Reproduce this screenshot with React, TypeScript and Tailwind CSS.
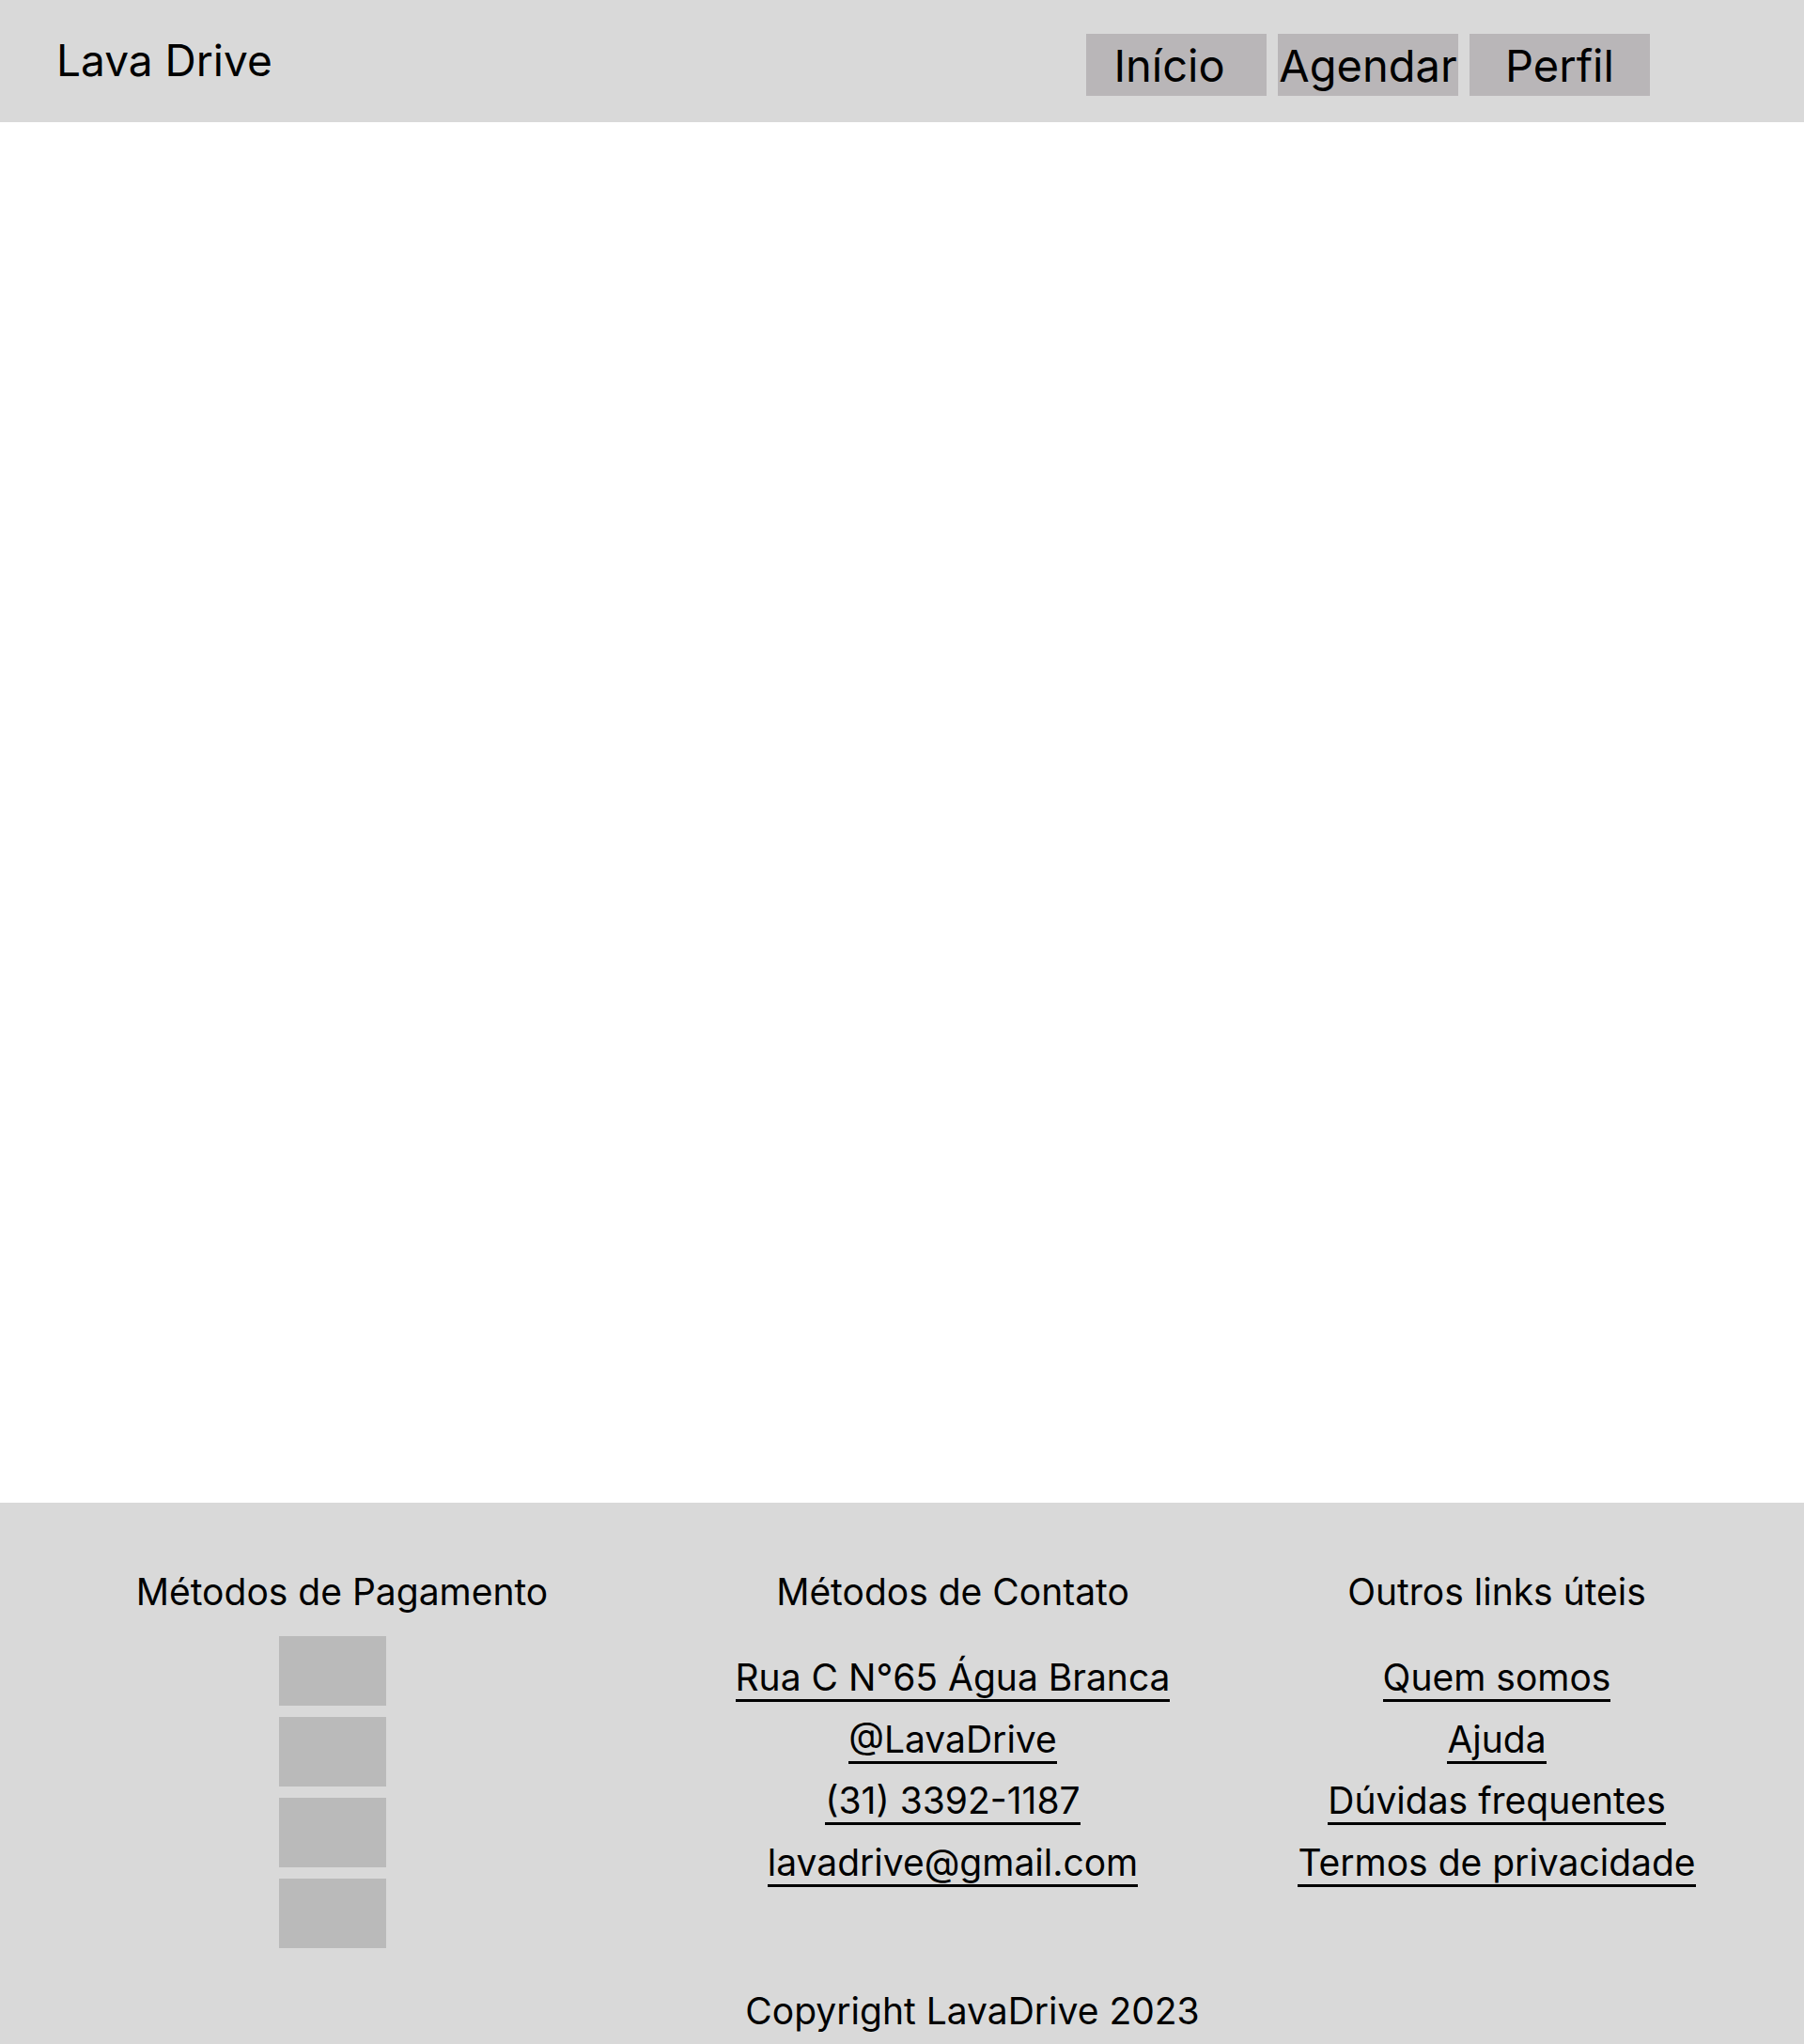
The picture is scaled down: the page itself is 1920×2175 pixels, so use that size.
const navItems = ['Início', 'Agendar', 'Perfil'];

const contacts = ['Rua C N°65 Água Branca', '@LavaDrive', '(31) 3392-1187', 'lavadrive@gmail.com'];

const usefulLinks = ['Quem somos', 'Ajuda', 'Dúvidas frequentes', 'Termos de privacidade'];

function Header() {
	return (
		<header className="h-[130px] shrink-0 bg-[#d9d9d9] flex items-start justify-between pl-[60px] pr-[164px]">
			<div className="mt-[31px] h-[66px] flex items-center text-[46px] leading-none text-black">Lava Drive</div>
			<nav className="mt-[36px] flex gap-[12px]">
				{navItems.map((item, i) => (
					<a
						key={item}
						href="#"
						className={
							i === 0
								? 'w-[192px] h-[66px] bg-[#b9b6b8] flex items-center justify-center pr-[15px] text-[47px] leading-none text-black'
								: 'w-[192px] h-[66px] bg-[#b9b6b8] flex items-center justify-center text-[47px] leading-none text-black'
						}
					>
						{item}
					</a>
				))}
			</nav>
		</header>
	);
}

function LinkColumn({ title, items }: { title: string; items: string[] }) {
	return (
		<div className="flex flex-col items-center">
			<h3 className="text-[39px] leading-[66px] font-normal">{title}</h3>
			<ul className="mt-[25px] flex flex-col items-center">
				{items.map((item) => (
					<li key={item} className="text-[39px] leading-[65.5px]">
						<a href="#" className="border-b-[3px] border-black">
							{item}
						</a>
					</li>
				))}
			</ul>
		</div>
	);
}

function Footer() {
	return (
		<footer className="bg-[#d9d9d9] pt-[62px] pb-[2px] text-black">
			<div className="grid grid-cols-[728px_572px_586px] items-start">
				{/* Pagamento */}
				<div className="flex flex-col items-center">
					<h3 className="text-[39px] leading-[66px] font-normal">Métodos de Pagamento</h3>
					<div className="mt-[14px] flex flex-col items-center gap-[12px]">
						{[0, 1, 2, 3].map((i) => (
							<div key={i} className="w-[114px] h-[74px] bg-[#bababa] mr-[20px]" />
						))}
					</div>
				</div>
				<LinkColumn title="Métodos de Contato" items={contacts} />
				<LinkColumn title="Outros links úteis" items={usefulLinks} />
			</div>
			<p className="mt-[34px] pl-[150px] text-center text-[39px] leading-[66px]">Copyright LavaDrive 2023</p>
		</footer>
	);
}

export default function App() {
	return (
		<div className="min-h-screen flex flex-col bg-white font-['Inter',sans-serif]">
			<Header />
			<main className="flex-1" />
			<Footer />
		</div>
	);
}
